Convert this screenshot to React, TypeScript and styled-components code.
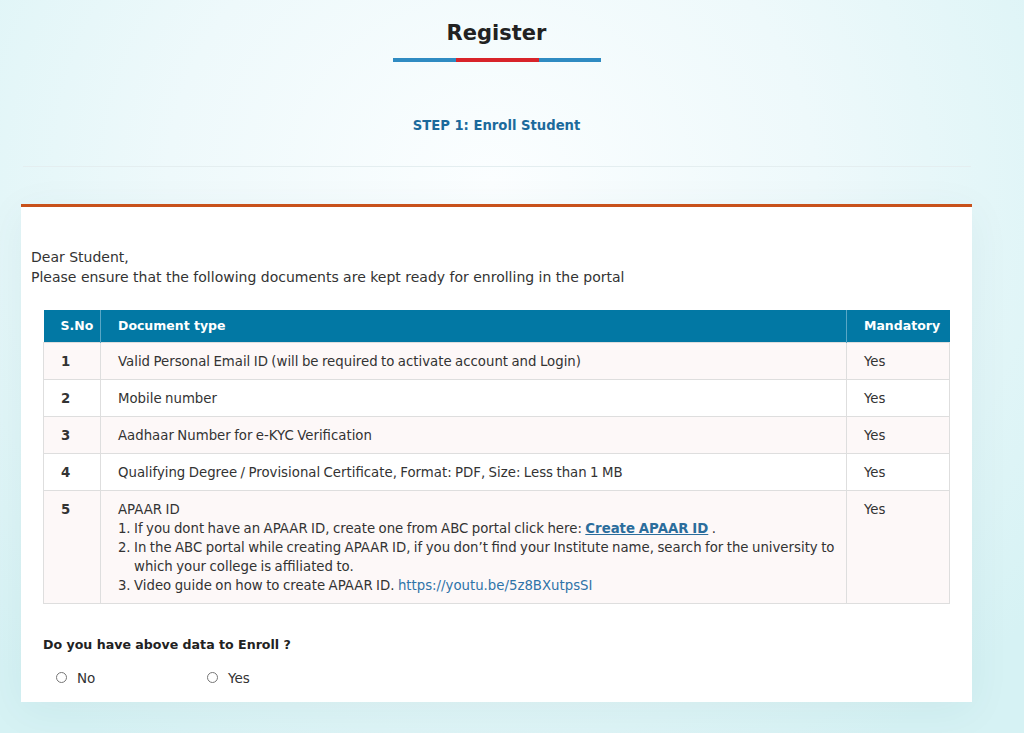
import styled, { createGlobalStyle } from 'styled-components'

const GlobalStyle = createGlobalStyle`
    html, body {
        margin: 0;
        padding: 0;
    }
    body {
        font-family: 'DejaVu Sans', 'Liberation Sans', sans-serif;
        color: #333;
        background: radial-gradient(ellipse 70% 90% at 48% 25%, #fbfeff 0%, #eef9fb 45%, #d6f2f4 100%);
        min-height: 733px;
    }
`

const Page = styled.div`
    width: 993px;
    min-height: 733px;
    display: flex;
    flex-direction: column;
    align-items: center;
    padding-top: 18px;
    box-sizing: border-box;
`

const Title = styled.h1`
    margin: 0;
    font-size: 21px;
    font-weight: 700;
    color: #222;
    line-height: 30px;
`

const TitleBar = styled.div`
    margin-top: 10px;
    width: 208px;
    height: 4px;
    display: flex;
`

const BarPart = styled.span<{ $color: string; $w: number }>`
    display: block;
    height: 100%;
    width: ${(p) => p.$w}px;
    background: ${(p) => p.$color};
`

const Step = styled.h2`
    margin: 54px 0 0 0;
    font-size: 13.2px;
    font-weight: 700;
    color: #1c6a9c;
    line-height: 20px;
`

const Rule = styled.hr`
    width: 948px;
    margin: 30px 0 0 0;
    border: none;
    border-top: 1px solid #e4eef0;
`

const Card = styled.div`
    margin-top: 37px;
    width: 951px;
    background: #fff;
    border-top: 3px solid #c8511b;
    box-shadow: 0 8px 40px rgba(30, 90, 110, 0.06);
    padding: 40px 22px 14px 22px;
    box-sizing: border-box;
`

const Intro = styled.p`
    margin: 0 0 0 -12px;
    font-size: 14px;
    line-height: 20px;
    color: #333;
`

const Table = styled.table`
    margin-top: 23px;
    width: 100%;
    border-collapse: collapse;
    table-layout: fixed;
    font-size: 13.3px;
    word-spacing: -0.8px;
`

const Th = styled.th<{ $w?: number }>`
    background: #0278a4;
    color: #fff;
    font-weight: 700;
    font-size: 12.5px;
    word-spacing: 0;
    text-align: left;
    height: 32px;
    padding: 0 6px 0 17px;
    border-left: 1px solid #5aa7c6;
    width: ${(p) => (p.$w ? `${p.$w}px` : 'auto')};
    box-sizing: border-box;
    &:first-child {
        border-left: none;
    }
`

const Tr = styled.tr<{ $odd: boolean }>`
    background: ${(p) => (p.$odd ? '#fdf8f8' : '#fff')};
`

const Td = styled.td<{ $bold?: boolean }>`
    border: 1px solid #dedede;
    padding: 9px 6px 8px 17px;
    vertical-align: top;
    line-height: 19px;
    color: #333;
    font-weight: ${(p) => (p.$bold ? 700 : 400)};
`

const Steps = styled.ol`
    margin: 0;
    padding-left: 16px;
`

const StrongLink = styled.a`
    color: #2b6d9c;
    font-weight: 700;
    text-decoration: underline;
`

const PlainLink = styled.a`
    color: #2f73a8;
    text-decoration: none;
`

const Question = styled.p`
    margin: 31px 0 0 0;
    font-size: 12.6px;
    font-weight: 700;
    color: #222;
    line-height: 20px;
`

const RadioRow = styled.div`
    display: flex;
    margin-top: 13px;
    padding-left: 13px;
`

const RadioLabel = styled.label`
    width: 151px;
    display: flex;
    align-items: center;
    gap: 10px;
    font-size: 13.5px;
    line-height: 20px;
    color: #333;
    input {
        margin: 0;
        width: 11px;
        height: 11px;
    }
`

const docs = [
    'Valid Personal Email ID (will be required to activate account and Login)',
    'Mobile number',
    'Aadhaar Number for e-KYC Verification',
    'Qualifying Degree / Provisional Certificate, Format: PDF, Size: Less than 1 MB',
]

const App = () => {
    return (
        <>
            <GlobalStyle />
            <Page>
                <Title>Register</Title>
                <TitleBar>
                    <BarPart $color='#2f8bc2' $w={63} />
                    <BarPart $color='#d8232a' $w={83} />
                    <BarPart $color='#2f8bc2' $w={62} />
                </TitleBar>
                <Step>STEP 1: Enroll Student</Step>
                <Rule />
                <Card>
                    <Intro>
                        Dear Student,
                        <br />
                        Please ensure that the following documents are kept ready for enrolling in the portal
                    </Intro>
                    <Table>
                        <thead>
                            <tr>
                                <Th $w={57}>S.No</Th>
                                <Th>Document type</Th>
                                <Th $w={103}>Mandatory</Th>
                            </tr>
                        </thead>
                        <tbody>
                            {docs.map((d, i) => (
                                <Tr key={d} $odd={i % 2 === 0}>
                                    <Td $bold>{i + 1}</Td>
                                    <Td>{d}</Td>
                                    <Td>Yes</Td>
                                </Tr>
                            ))}
                            <Tr $odd>
                                <Td $bold>5</Td>
                                <Td>
                                    APAAR ID
                                    <Steps>
                                        <li>
                                            If you dont have an APAAR ID, create one from ABC portal click here:{' '}
                                            <StrongLink href='#'>Create APAAR ID</StrongLink> .
                                        </li>
                                        <li>
                                            In the ABC portal while creating APAAR ID, if you don’t find your Institute name, search for the university to which your college is affiliated to.
                                        </li>
                                        <li>
                                            Video guide on how to create APAAR ID.{' '}
                                            <PlainLink href='#'>https://youtu.be/5z8BXutpsSI</PlainLink>
                                        </li>
                                    </Steps>
                                </Td>
                                <Td>Yes</Td>
                            </Tr>
                        </tbody>
                    </Table>
                    <Question>Do you have above data to Enroll ?</Question>
                    <RadioRow>
                        <RadioLabel>
                            <input type='radio' name='enroll' />
                            No
                        </RadioLabel>
                        <RadioLabel>
                            <input type='radio' name='enroll' />
                            Yes
                        </RadioLabel>
                    </RadioRow>
                </Card>
            </Page>
        </>
    )
}

export default App
